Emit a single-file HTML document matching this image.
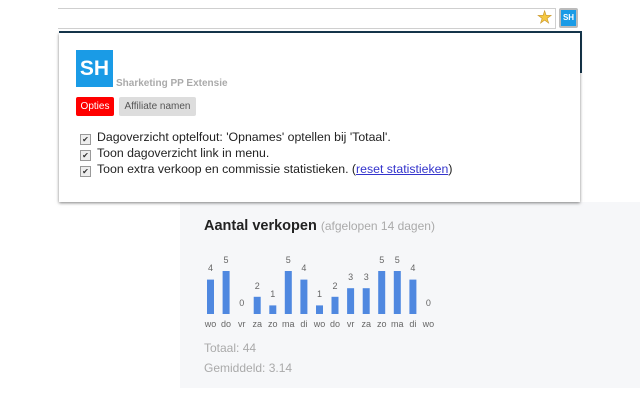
<!DOCTYPE html>
<html><head><style>
body{margin:0;width:640px;height:400px;position:relative;background:#fff;font-family:"Liberation Sans",sans-serif;overflow:hidden}
.abs{position:absolute}
.cb{display:inline-block;width:9px;height:9px;border:1px solid #999;background:#eee;margin-right:6px;vertical-align:-1px;font-size:8px;line-height:9px;text-align:center;color:#333}
</style></head><body>
<div class="abs" style="left:58px;top:8px;width:497px;height:19px;border:1px solid #cfcfcf;border-left:none;background:#fff"></div>
<div class="abs" style="left:537px;top:8px;font-size:17px;color:#f5c842;-webkit-text-stroke:0.6px #c9962a">★</div>
<div class="abs" style="left:559px;top:8px;width:19px;height:20px;background:#bbb;border-radius:2px"></div>
<div class="abs" style="left:561px;top:10px;width:15px;height:16px;background:#1a9be6;color:#fff;font-size:8px;font-weight:bold;line-height:16px;text-align:center">SH</div>
<div class="abs" style="left:59px;top:31px;width:522px;height:3px;background:#16384f"></div>
<div class="abs" style="left:579px;top:31px;width:3px;height:42px;background:#16384f"></div>
<div class="abs" style="left:180px;top:202px;width:460px;height:186px;background:#f6f7f9"></div>
<div class="abs" style="left:59px;top:33px;width:521px;height:169px;background:#fff;box-shadow:0 1px 3px rgba(0,0,0,.5)"></div>
<div class="abs" style="left:76px;top:50px;width:37px;height:37px;background:#1a9be6;color:#fff;font-size:21px;font-weight:bold;line-height:38px;text-align:center">SH</div>
<div class="abs" style="left:116px;top:78px;font-size:10px;font-weight:bold;color:#aaa">Sharketing PP Extensie</div>
<div class="abs" style="left:76px;top:97px;width:38px;height:19px;background:#f00;border-radius:2px;color:#fff;font-size:10px;line-height:19px;text-align:center">Opties</div>
<div class="abs" style="left:119px;top:97px;width:77px;height:19px;background:#ddd;border-radius:2px;color:#555;font-size:10px;line-height:19px;text-align:center">Affiliate namen</div>
<div class="abs" style="left:80px;top:129px;font-size:12.3px;color:#222;line-height:16px">
<div><span class="cb">✔</span>Dagoverzicht optelfout: 'Opnames' optellen bij 'Totaal'.</div>
<div><span class="cb">✔</span>Toon dagoverzicht link in menu.</div>
<div><span class="cb">✔</span>Toon extra verkoop en commissie statistieken. (<span style="color:#33c;text-decoration:underline">reset statistieken</span>)</div>
</div>
<div class="abs" style="left:204px;top:218px;font-size:14.5px;font-weight:bold;color:#222">Aantal verkopen <span style="font-weight:normal;font-size:12px;color:#aaa">(afgelopen 14 dagen)</span></div>
<svg class="abs" style="left:180px;top:250px" width="300" height="85" font-family="Liberation Sans" font-size="9" fill="#666" text-anchor="middle">
<rect x="27" y="29.6" width="7" height="34.4" fill="#4f88e0"/><text x="30.5" y="21">4</text><text x="30.5" y="77">wo</text>
<rect x="42.6" y="21" width="7" height="43" fill="#4f88e0"/><text x="46" y="13">5</text><text x="46" y="77">do</text>
<text x="61.7" y="56">0</text><text x="61.7" y="77">vr</text>
<rect x="73.7" y="46.8" width="7" height="17.2" fill="#4f88e0"/><text x="77.2" y="39">2</text><text x="77.2" y="77">za</text>
<rect x="89.3" y="55.4" width="7" height="8.6" fill="#4f88e0"/><text x="92.8" y="47">1</text><text x="92.8" y="77">zo</text>
<rect x="104.8" y="21" width="7" height="43" fill="#4f88e0"/><text x="108.3" y="13">5</text><text x="108.3" y="77">ma</text>
<rect x="120.4" y="29.6" width="7" height="34.4" fill="#4f88e0"/><text x="123.9" y="21">4</text><text x="123.9" y="77">di</text>
<rect x="136" y="55.4" width="7" height="8.6" fill="#4f88e0"/><text x="139.5" y="47">1</text><text x="139.5" y="77">wo</text>
<rect x="151.5" y="46.8" width="7" height="17.2" fill="#4f88e0"/><text x="155" y="39">2</text><text x="155" y="77">do</text>
<rect x="167.1" y="38.2" width="7" height="25.8" fill="#4f88e0"/><text x="170.6" y="30">3</text><text x="170.6" y="77">vr</text>
<rect x="182.7" y="38.2" width="7" height="25.8" fill="#4f88e0"/><text x="186.2" y="30">3</text><text x="186.2" y="77">za</text>
<rect x="198.2" y="21" width="7" height="43" fill="#4f88e0"/><text x="201.7" y="13">5</text><text x="201.7" y="77">zo</text>
<rect x="213.8" y="21" width="7" height="43" fill="#4f88e0"/><text x="217.3" y="13">5</text><text x="217.3" y="77">ma</text>
<rect x="229.4" y="29.6" width="7" height="34.4" fill="#4f88e0"/><text x="232.9" y="21">4</text><text x="232.9" y="77">di</text>
<text x="248.4" y="56">0</text><text x="248.4" y="77">wo</text>
</svg>
<div class="abs" style="left:204px;top:341px;font-size:12px;color:#aaa">Totaal: 44</div>
<div class="abs" style="left:204px;top:361px;font-size:12px;color:#aaa">Gemiddeld: 3.14</div>
</body></html>
